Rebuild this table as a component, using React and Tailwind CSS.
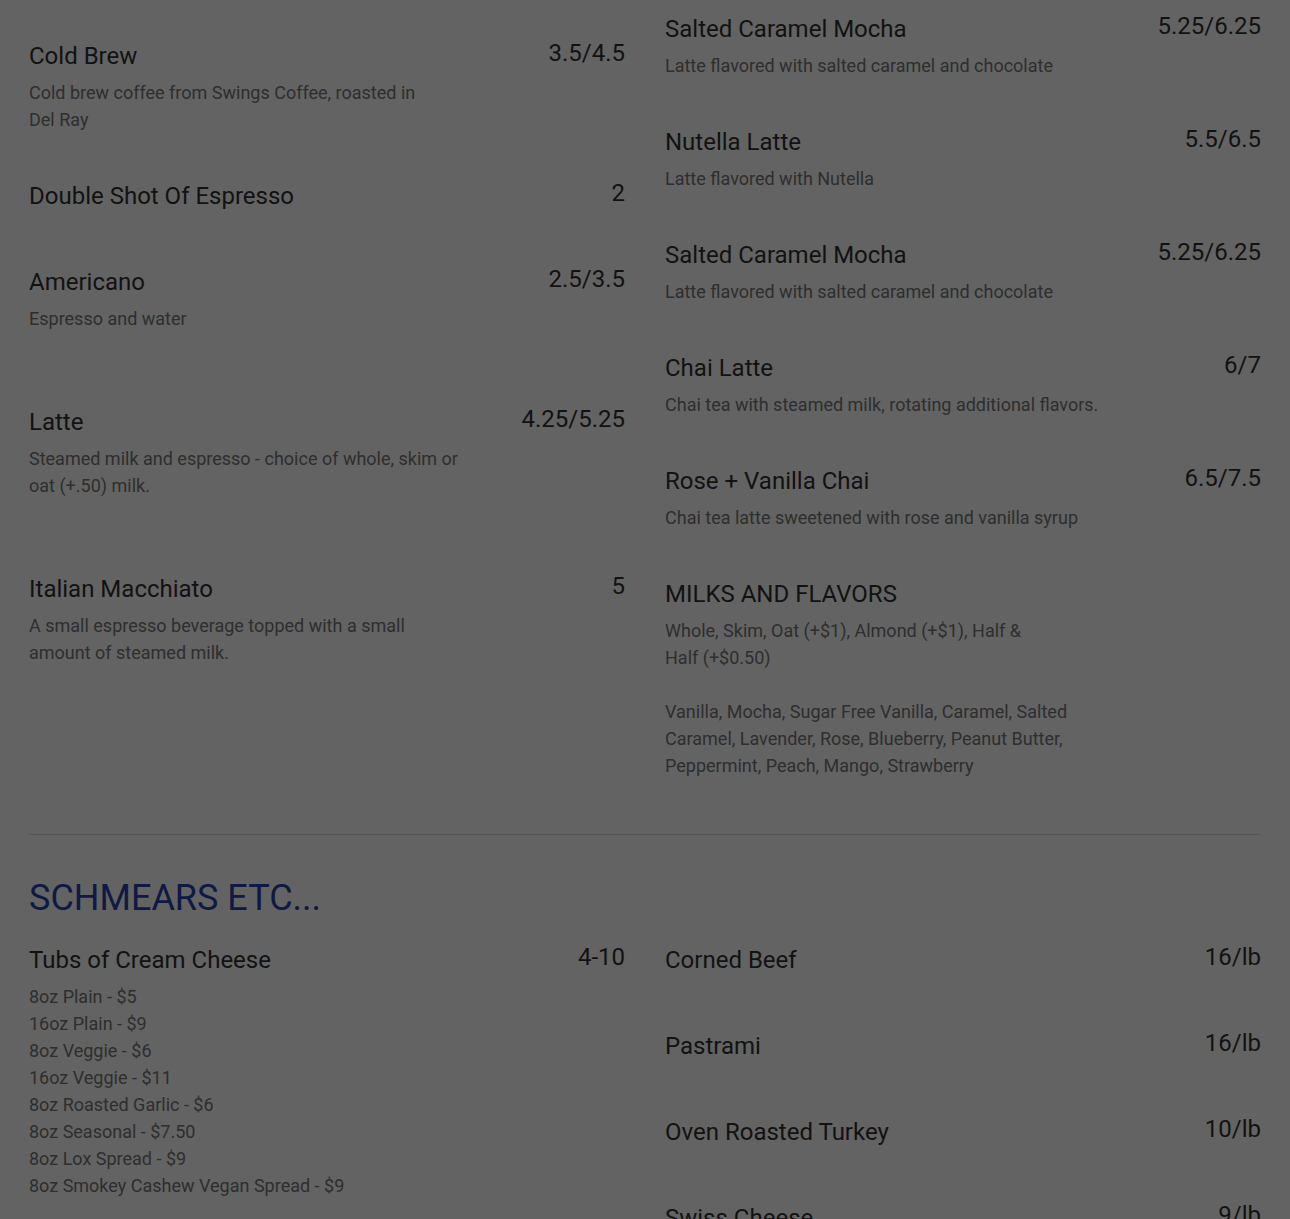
import React from 'react';

const drinksLeft = [
  { name: 'Cold Brew', price: '3.5/4.5', desc: ['Cold brew coffee from Swings Coffee, roasted in', 'Del Ray'] },
  { name: 'Double Shot Of Espresso', price: '2', desc: [] },
  { name: 'Americano', price: '2.5/3.5', desc: ['Espresso and water', ''] },
  { name: 'Latte', price: '4.25/5.25', desc: ['Steamed milk and espresso - choice of whole, skim or', 'oat (+.50) milk.', ''] },
  { name: 'Italian Macchiato', price: '5', desc: ['A small espresso beverage topped with a small', 'amount of steamed milk.'] },
];

const drinksRight = [
  { name: 'Salted Caramel Mocha', price: '5.25/6.25', desc: ['Latte flavored with salted caramel and chocolate'] },
  { name: 'Nutella Latte', price: '5.5/6.5', desc: ['Latte flavored with Nutella'] },
  { name: 'Salted Caramel Mocha', price: '5.25/6.25', desc: ['Latte flavored with salted caramel and chocolate'] },
  { name: 'Chai Latte', price: '6/7', desc: ['Chai tea with steamed milk, rotating additional flavors.'] },
  { name: 'Rose + Vanilla Chai', price: '6.5/7.5', desc: ['Chai tea latte sweetened with rose and vanilla syrup'] },
  {
    name: 'MILKS AND FLAVORS',
    price: '',
    desc: [
      'Whole, Skim, Oat (+$1), Almond (+$1), Half &',
      'Half (+$0.50)',
      '',
      'Vanilla, Mocha, Sugar Free Vanilla, Caramel, Salted',
      'Caramel, Lavender, Rose, Blueberry, Peanut Butter,',
      'Peppermint, Peach, Mango, Strawberry',
    ],
  },
];

const schmearsLeft = [
  {
    name: 'Tubs of Cream Cheese',
    price: '4-10',
    desc: [
      '8oz Plain - $5',
      '16oz Plain - $9',
      '8oz Veggie - $6',
      '16oz Veggie - $11',
      '8oz Roasted Garlic - $6',
      '8oz Seasonal - $7.50',
      '8oz Lox Spread - $9',
      '8oz Smokey Cashew Vegan Spread - $9',
    ],
  },
];

const schmearsRight = [
  { name: 'Corned Beef', price: '16/lb', desc: [] },
  { name: 'Pastrami', price: '16/lb', desc: [] },
  { name: 'Oven Roasted Turkey', price: '10/lb', desc: [] },
  { name: 'Swiss Cheese', price: '9/lb', desc: [] },
];

const MenuItem = ({ item }) => (
  <div className="pb-[47px]">
    <div className="flex items-start justify-between">
      <h3 className="text-[24px] leading-[32px] text-[#121212] font-normal">{item.name}</h3>
      <span className="text-[24px] leading-[26px] text-[#121212]">{item.price}</span>
    </div>
    <div className="pt-[7px] max-w-[440px] text-[18px] leading-[27px] text-[#2e2e2e]">
      {item.desc.map((line, i) => (
        <p key={i} className="h-[27px] whitespace-nowrap">{line}</p>
      ))}
    </div>
  </div>
);

export default function App() {
  return (
    <div className="min-h-screen bg-[#636363] font-['Roboto',sans-serif] overflow-hidden h-[1219px]">
      <div className="px-[29px]">
        {/* Drinks */}
        <div className="grid grid-cols-2 gap-x-10">
          <div className="pt-[40px]">
            {drinksLeft.map((item, i) => (
              <MenuItem key={i} item={item} />
            ))}
          </div>
          <div className="pt-[13px]">
            {drinksRight.map((item, i) => (
              <MenuItem key={i} item={item} />
            ))}
          </div>
        </div>

        <div className="mt-[8px] h-px bg-[#575757]" />

        {/* Schmears */}
        <h2 className="mt-[43px] text-[36px] leading-[40px] text-[#0f1944]">SCHMEARS ETC...</h2>
        <div className="mt-[26px] grid grid-cols-2 gap-x-10">
          <div>
            {schmearsLeft.map((item, i) => (
              <MenuItem key={i} item={item} />
            ))}
          </div>
          <div>
            {schmearsRight.map((item, i) => (
              <MenuItem key={i} item={item} />
            ))}
          </div>
        </div>
      </div>
    </div>
  );
}
